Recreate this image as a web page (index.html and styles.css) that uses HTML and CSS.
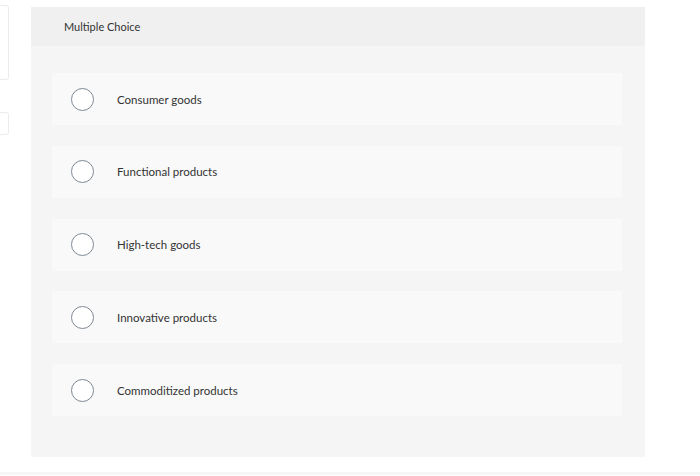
FILE: index.html
```html
<!DOCTYPE html>
<html>
<head>
<meta charset="utf-8">
<link rel="stylesheet" href="styles.css">
</head>
<body>
<div class="page">
  <div class="side">
    <div class="side-box tall"></div>
    <div class="side-box short"></div>
  </div>
  <div class="panel">
    <div class="panel-head">Multiple Choice</div>
    <div class="options">
      <div class="option"><span class="radio"></span><span class="label">Consumer goods</span></div>
      <div class="option"><span class="radio"></span><span class="label">Functional products</span></div>
      <div class="option"><span class="radio"></span><span class="label">High-tech goods</span></div>
      <div class="option"><span class="radio"></span><span class="label">Innovative products</span></div>
      <div class="option"><span class="radio"></span><span class="label">Commoditized products</span></div>
    </div>
  </div>
</div>
<div class="bottom-line"></div>
</body>
</html>
```

FILE: styles.css
```css
html, body {
  margin: 0;
  padding: 0;
  background: #ffffff;
  font-family: "Lato", "Open Sans", sans-serif;
  color: #333;
}
.page {
  display: flex;
  padding-top: 7px;
  height: 472px;
  box-sizing: border-box;
}
.side {
  width: 31px;
  flex: none;
}
.side-box {
  width: 8px;
  border: 1px solid #ececec;
  border-left: none;
  border-radius: 0 3px 3px 0;
}
.side-box.tall {
  height: 73px;
  margin-top: -2px;
}
.side-box.short {
  height: 21px;
  margin-top: 32px;
}
.panel {
  width: 614px;
  height: 450px;
  background: #f5f5f5;
  display: flex;
  flex-direction: column;
}
.panel-head {
  background: #f0f0f0;
  height: 39px;
  padding-left: 33px;
  display: flex;
  align-items: center;
  font-size: 11px;
  color: #333;
  box-sizing: border-box;
  padding-bottom: 1px;
}
.options {
  display: flex;
  flex-direction: column;
  gap: 20.75px;
  padding: 27px 23px 0 21px;
}
.option {
  background: #f9f9f9;
  height: 52px;
  display: flex;
  align-items: center;
  padding-left: 19px;
}
.radio {
  width: 21px;
  height: 21px;
  border: 1.5px solid #7d8792;
  border-radius: 50%;
  background: #fff;
  flex: none;
}
.label {
  margin-left: 23px;
  font-size: 11.5px;
  color: #333;
}
.bottom-line {
  height: 3px;
  background: #f6f6f6;
}
```
